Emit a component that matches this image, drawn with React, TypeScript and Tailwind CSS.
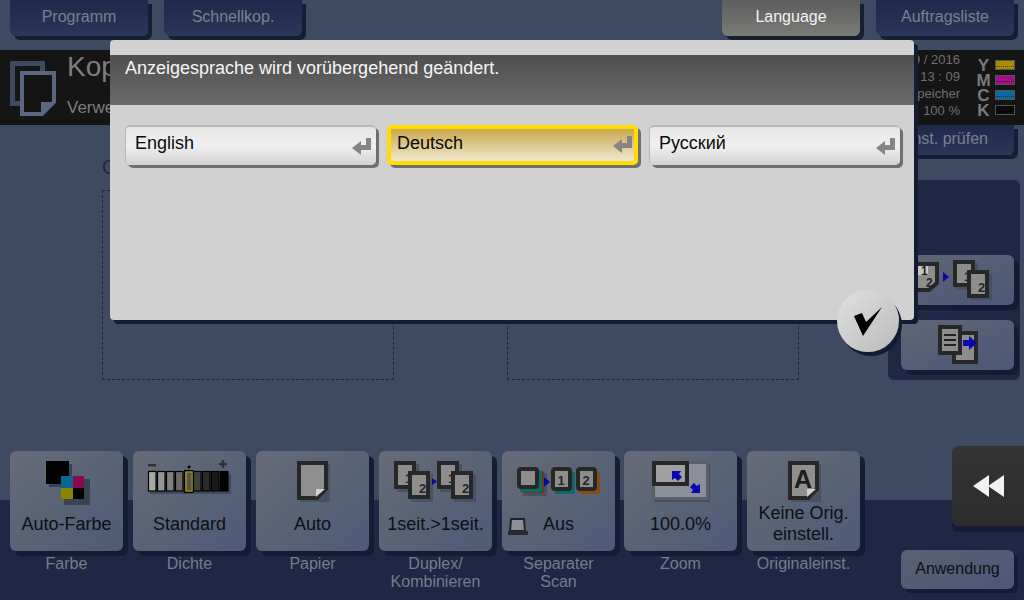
import React from 'react';

const TopButton: React.FC<{ label: string; active?: boolean; className?: string }> = ({ label, active, className = '' }) => (
  <div
    className={`flex h-[36px] w-[138px] items-center justify-center rounded-b-[6px] pb-[3px] text-[16px] ${
      active
        ? 'bg-gradient-to-b from-[#5d5d5d] to-[#7b7b78] text-[#f2f2f2] shadow-[4px_4px_0_#16202f]'
        : 'bg-gradient-to-b from-[#1f2a4a] to-[#2b3658] text-[#7b808c] shadow-[4px_4px_0_#151e33]'
    } ${className}`}
  >
    {label}
  </div>
);

const ReturnIcon: React.FC = () => (
  <svg width="20" height="18" viewBox="0 0 20 18" className="shrink-0">
    <path d="M16.5 0v9.5H7" fill="none" stroke="#858585" strokeWidth="5" />
    <path d="M0 10 9 3v14z" fill="#858585" />
  </svg>
);

const LangButton: React.FC<{ label: string; selected?: boolean }> = ({ label, selected }) => (
  <div
    className={`flex h-[40px] w-[251px] items-center justify-between rounded-[5px] text-[18px] text-[#0a0a0a] shadow-[3px_3px_0_#6f6f6f] ${
      selected
        ? 'border-[4px] border-[#ffdd00] bg-gradient-to-b from-[#c9a84a] to-[#efe9cc] pr-[1px] pb-[4px] pl-[6px]'
        : 'border-t-2 border-l border-[#b8b8b8] bg-gradient-to-b from-[#e6e6e6] via-[#f0f0f0] to-[#d2d2d2] pr-[4px] pb-[5px] pl-[9px]'
    }`}
  >
    <span>{label}</span>
    <span className={selected ? 'mt-[3px]' : 'mt-[6px]'}>
      <ReturnIcon />
    </span>
  </div>
);

const Sheet: React.FC<{ x: number; y: number; w?: number; h?: number; num?: string }> = ({ x, y, w = 22, h = 28, num }) => (
  <g>
    <rect x={x + 3} y={y + 3} width={w} height={h} fill="#3f4858" opacity="0.6" />
    <rect x={x + 2} y={y + 2} width={w - 4} height={h - 4} fill="#8d8d8d" stroke="#272727" strokeWidth="4" />
    {num && (
      <text x={x + w - 11} y={y + h - 6} fontSize="13" fontWeight="700" fill="#262626" fontFamily="Liberation Sans, sans-serif">
        {num}
      </text>
    )}
  </g>
);

const PageOutline: React.FC = () => (
  <>
    <path d="M44 13h30v38H44z" fill="#3f4858" opacity="0.6" />
    <path d="M43 12h27v26l-9 9H43z" fill="#8f8f8f" stroke="#272727" strokeWidth="4" />
    <path d="M60 46l9-8h-9z" fill="#d0d0d0" />
  </>
);

const DENSITY_FILLS = ['#a8a8a8', '#949494', '#808080', '#6a6a6a', '#555', '#3f3f3f', '#2c2c2c', '#1a1a1a', '#000'];

const TileIcon: React.FC<{ kind: string }> = ({ kind }) => {
  if (kind === 'color') {
    return (
      <>
        <rect x="39" y="13" width="23" height="23" fill="#3b4254" />
        <rect x="54" y="28" width="26" height="26" fill="#3b4254" />
        <rect x="36" y="10" width="23" height="23" fill="#000" />
        <rect x="51" y="25" width="12" height="12" fill="#0a6693" />
        <rect x="63" y="25" width="11" height="12" fill="#8a0a52" />
        <rect x="51" y="37" width="12" height="11" fill="#8a8500" />
        <rect x="63" y="37" width="11" height="11" fill="#000" />
      </>
    );
  }
  if (kind === 'density') {
    return (
      <>
        <rect x="17" y="23" width="81" height="20" fill="#3b4254" opacity="0.7" />
        {DENSITY_FILLS.map((f, i) => (
          <rect key={i} x={15.5 + i * 9} y={20.5} width="7.5" height="19.5" fill={f} stroke="#000" strokeWidth="1.2" />
        ))}
        <rect x="51.5" y="19.5" width="8.5" height="22" fill="none" stroke="#000" strokeWidth="1" />
        <rect x="53" y="21" width="6" height="19" fill="none" stroke="#a08c10" strokeWidth="1.5" />
        <rect x="15" y="13" width="8" height="2.5" fill="#333" />
        <circle cx="56" cy="16" r="1.5" fill="#000" />
        <path d="M90 9v8M86 13h8" stroke="#333" strokeWidth="2.5" />
      </>
    );
  }
  if (kind === 'paper') {
    return <PageOutline />;
  }
  if (kind === 'duplex') {
    return (
      <>
        <Sheet x={15} y={10} num="1" />
        <Sheet x={29} y={20} num="2" />
        <path d="M53 27l5 3.5-5 3.5z" fill="#0a0a9a" />
        <Sheet x={58} y={10} num="1" />
        <Sheet x={72} y={20} num="2" />
      </>
    );
  }
  if (kind === 'separate') {
    return (
      <>
        <rect x="21" y="22" width="24" height="23" fill="#3f4858" opacity="0.7" />
        <rect x="20" y="20" width="22" height="22" rx="2" fill="#6b3a10" />
        <rect x="18" y="19" width="22" height="22" rx="2" fill="#0e6a6a" />
        <rect x="17" y="18" width="18" height="18" rx="2" fill="#8d8d8d" stroke="#272727" strokeWidth="4" />
        <path d="M42 26l6 5-6 5z" fill="#0a0a9a" />
        <rect x="53" y="21" width="20" height="22" rx="2" fill="#0e6a6a" />
        <rect x="51" y="18" width="17" height="20" rx="2" fill="#8d8d8d" stroke="#272727" strokeWidth="4" />
        <text x="55.5" y="34" fontSize="13" fontWeight="700" fill="#262626" fontFamily="Liberation Sans, sans-serif">1</text>
        <rect x="78" y="21" width="20" height="22" rx="2" fill="#8a4a12" />
        <rect x="76" y="18" width="17" height="20" rx="2" fill="#8d8d8d" stroke="#272727" strokeWidth="4" />
        <text x="80.5" y="34" fontSize="13" fontWeight="700" fill="#262626" fontFamily="Liberation Sans, sans-serif">2</text>
      </>
    );
  }
  if (kind === 'zoom') {
    return (
      <>
        <rect x="30" y="13" width="56" height="38" fill="#3f4858" opacity="0.7" />
        <rect x="29.5" y="11.5" width="54" height="36" fill="#8b8f99" stroke="#5b5f69" strokeWidth="3" />
        <rect x="30" y="12" width="33" height="21" fill="#a0a0a0" stroke="#272727" strokeWidth="4" />
        <path d="M48 20h9l-2 3 3 3-4 4-3-3-3 2z" fill="#0a0ab0" />
        <path d="M76 42h-9l2-3-3-3 4-4 3 3 3-2z" fill="#0a0ab0" />
      </>
    );
  }
  return (
    <>
      <PageOutline />
      <text x="47" y="37" fontSize="25" fontWeight="700" fill="#1d1d1d" fontFamily="Liberation Sans, sans-serif">A</text>
    </>
  );
};

const Tile: React.FC<{ kind: string; value: string[]; label: string[]; className?: string }> = ({ kind, value, label, className = '' }) => (
  <div className={`flex w-[113px] flex-col items-center ${className}`}>
    <div className="relative h-[100px] w-[113px] rounded-[6px] bg-gradient-to-br from-[#666b78] via-[#596376] to-[#4f5a78] shadow-[5px_5px_0_#141c33]">
      <svg width="113" height="58" viewBox="0 0 113 58" className="absolute top-0 left-0">
        <TileIcon kind={kind} />
      </svg>
      {kind === 'separate' && (
        <svg width="22" height="18" viewBox="0 0 22 18" className="absolute top-[67px] left-[5px]">
          <path d="M4 1h13l1 12H3z" fill="#8b8f99" stroke="#222" strokeWidth="2" />
          <rect x="1" y="13" width="20" height="4" fill="#2b2b2b" />
        </svg>
      )}
      <div
        className={`absolute inset-x-0 flex flex-col items-center text-[18px] text-[#0c0f16] ${
          value.length > 1 ? 'top-[52px] leading-[21px]' : 'top-[61px] leading-[24px]'
        } ${kind === 'duplex' ? 'text-[16.5px]' : ''}`}
      >
        {value.map(v => (
          <span key={v} className="whitespace-nowrap">{v}</span>
        ))}
      </div>
    </div>
    <div className="mt-[3px] flex flex-col items-center pt-[1px] text-[16px] leading-[18px] text-[#767c8a]">
      {label.map(l => (
        <span key={l} className="whitespace-nowrap">{l}</span>
      ))}
    </div>
  </div>
);

const SideButton: React.FC<{ children: React.ReactNode }> = ({ children }) => (
  <div className="flex h-[50px] w-[113px] items-center justify-center rounded-[6px] bg-gradient-to-br from-[#5f6677] to-[#4c5676] shadow-[5px_5px_0_#141c33]">
    {children}
  </div>
);

const TONERS = [
  { letter: 'Y', bar: 'bg-[#a68e00]' },
  { letter: 'M', bar: 'bg-[#a3108a]' },
  { letter: 'C', bar: 'bg-[#0a6aa0]' },
  { letter: 'K', bar: 'bg-[#0a0a0a]' },
];

const App: React.FC = () => {
  return (
    <div className="relative flex h-[600px] w-[1024px] flex-col overflow-hidden bg-[linear-gradient(#3d4a62_500px,#1f2744_500px)] font-['Liberation_Sans',sans-serif]">
      {/* Top tabs */}
      <div className="flex h-[50px] shrink-0 items-start pl-[10px]">
        <TopButton label="Programm" />
        <TopButton label="Schnellkop." className="ml-[16px]" />
        <TopButton label="Language" active className="ml-auto" />
        <TopButton label="Auftragsliste" className="mr-[10px] ml-[16px]" />
      </div>

      {/* Status bar */}
      <div className="flex h-[75px] shrink-0 items-center bg-[#151515] pr-[9px] pl-[10px]">
        <svg width="47" height="56" viewBox="0 0 47 56">
          <rect x="2.5" y="3.5" width="30" height="40" fill="none" stroke="#3d4a62" strokeWidth="5" />
          <path d="M12 13h32v29L32 54H12z" fill="#141414" stroke="#5b6780" strokeWidth="4" />
          <path d="M31 56l15-14H31z" fill="#5b6780" />
        </svg>
        <div className="ml-[10px] flex flex-col self-start pt-[1px] text-[#7d7d7d]">
          <span className="text-[28px] leading-[32px]">Kop</span>
          <span className="mt-[15px] text-[17px] leading-[20px]">Verwe</span>
        </div>
        <div className="ml-auto flex flex-col items-end pb-[5px] text-[13px] leading-[17px] text-[#6f6f6f]">
          <span>09 / 2016</span>
          <span>13 : 09</span>
          <span>Speicher</span>
          <span>100 %</span>
        </div>
        <div className="ml-[12px] flex flex-col">
          {TONERS.map(t => (
            <div key={t.letter} className="flex h-[15px] items-center">
              <span className="w-[23px] text-center text-[17px] leading-[15px] font-bold text-[#7a7a7a]">{t.letter}</span>
              <span className={`flex h-[10px] w-[20px] items-end border border-[#555] ${t.bar}`}>
                <span className="mb-[2px] h-0 w-full border-b border-dotted border-[#00000088]" />
              </span>
            </div>
          ))}
        </div>
      </div>

      {/* Main area */}
      <div className="flex h-[326px] shrink-0">
        <div className="flex flex-col pl-[102px]">
          <span className="mt-[30px] h-[35px] text-[20px] leading-[24px] text-[#1f2738]">O</span>
          <div className="flex gap-[113px]">
            <div className="h-[190px] w-[292px] border border-dashed border-[#1d2536]" />
            <div className="h-[190px] w-[292px] border border-dashed border-[#1d2536]" />
          </div>
        </div>
        <div className="ml-auto flex w-[148px] flex-col">
          <div className="flex h-[30px] w-[138px] items-center justify-end rounded-b-[6px] bg-gradient-to-b from-[#1f2a4a] to-[#2b3658] pr-[26px] pb-[2px] text-[16px] text-[#7b808c] shadow-[4px_4px_0_#151e33]">
            nst. prüfen
          </div>
          <div className="mt-[25px] ml-[12px] flex h-[200px] w-[132px] flex-col items-start justify-end gap-[15px] rounded-[6px] bg-[#1f2744] pb-[10px] pl-[13px]">
            <SideButton>
              <svg width="90" height="40" viewBox="0 0 90 40">
                <path d="M3 4h21v19l-8 7H3z" fill="#8d8d8d" stroke="#272727" strokeWidth="4" />
                <rect x="5" y="6" width="10" height="9" fill="#c8c8c8" />
                <text x="8" y="15" fontSize="12" fontWeight="700" fill="#222" fontFamily="Liberation Sans, sans-serif">1</text>
                <text x="13" y="27" fontSize="12" fontWeight="700" fill="#222" fontFamily="Liberation Sans, sans-serif">2</text>
                <path d="M30 12l6 5-6 5z" fill="#0a0a9a" />
                <Sheet x={40} y={0} w={22} h={27} num="1" />
                <Sheet x={54} y={10} w={22} h={28} num="2" />
              </svg>
            </SideButton>
            <SideButton>
              <svg width="44" height="40" viewBox="0 0 44 40">
                <rect x="18" y="8" width="22" height="29" fill="#8d8d8d" stroke="#272727" strokeWidth="4" />
                <rect x="4" y="2" width="20" height="26" fill="#8d8d8d" stroke="#272727" strokeWidth="4" />
                <path d="M8 10h12M8 15h12M8 20h12" stroke="#222" strokeWidth="2" />
                <path d="M27 15h6v-4l8 7-8 7v-4h-6z" fill="#0a0ab0" />
              </svg>
            </SideButton>
          </div>
        </div>
      </div>

      {/* Function tiles */}
      <div className="flex flex-1 pl-[10px]">
        <div className="flex gap-[10px]">
          <Tile kind="color" value={['Auto-Farbe']} label={['Farbe']} />
          <Tile kind="density" value={['Standard']} label={['Dichte']} />
          <Tile kind="paper" value={['Auto']} label={['Papier']} />
          <Tile kind="duplex" value={['1seit.>1seit.']} label={['Duplex/', 'Kombinieren']} />
          <Tile kind="separate" value={['Aus']} label={['Separater', 'Scan']} />
          <Tile kind="zoom" value={['100.0%']} label={['Zoom']} className="-ml-px" />
          <Tile kind="orig" value={['Keine Orig.', 'einstell.']} label={['Originaleinst.']} />
        </div>
        <div className="ml-auto flex flex-col items-end">
          <div className="-mt-[5px] flex h-[80px] w-[72px] items-center justify-center rounded-l-[6px] bg-gradient-to-b from-[#343434] to-[#2c2c2c] shadow-[0_6px_0_#141c33]">
            <svg width="31" height="22" viewBox="0 0 31 22">
              <path d="M16 0v22L0 11zM31 0v22L15 11z" fill="#f2f2f2" />
            </svg>
          </div>
          <div className="mt-[24px] mr-[10px] flex h-[39px] w-[113px] items-center justify-center rounded-[6px] bg-gradient-to-br from-[#5a6173] to-[#4c5676] pb-[2px] text-[16px] text-[#0c0f16] shadow-[4px_4px_0_#141c33]">
            Anwendung
          </div>
        </div>
      </div>

      {/* Language dialog */}
      <div className="absolute top-[40px] left-[110px] h-[280px] w-[804px] rounded-[4px] bg-[#d1d1d1] pt-[15px] shadow-[4px_4px_0_#141c33]">
        <div className="h-[50px] bg-gradient-to-b from-[#4f4f4f] to-[#6b6b6b] pt-[3px] pl-[15px] text-[18px] leading-[21px] text-[#f5f5f5]">
          Anzeigesprache wird vorübergehend geändert.
        </div>
        <div className="mt-[20px] flex gap-[11px] pl-[15px]">
          <LangButton label="English" />
          <LangButton label="Deutsch" selected />
          <LangButton label="Русский" />
        </div>
      </div>
      <div className="absolute top-[290px] left-[837px] flex h-[62px] w-[62px] items-center justify-center rounded-full bg-gradient-to-br from-[#e2e2e2] to-[#b9b9b9] shadow-[3px_4px_0_#141c33]">
        <svg width="30" height="30" viewBox="0 0 30 30">
          <path d="M1 10l8-3 4 9L29 1 10 30z" fill="#000" />
        </svg>
      </div>
    </div>
  );
};

export default App;
